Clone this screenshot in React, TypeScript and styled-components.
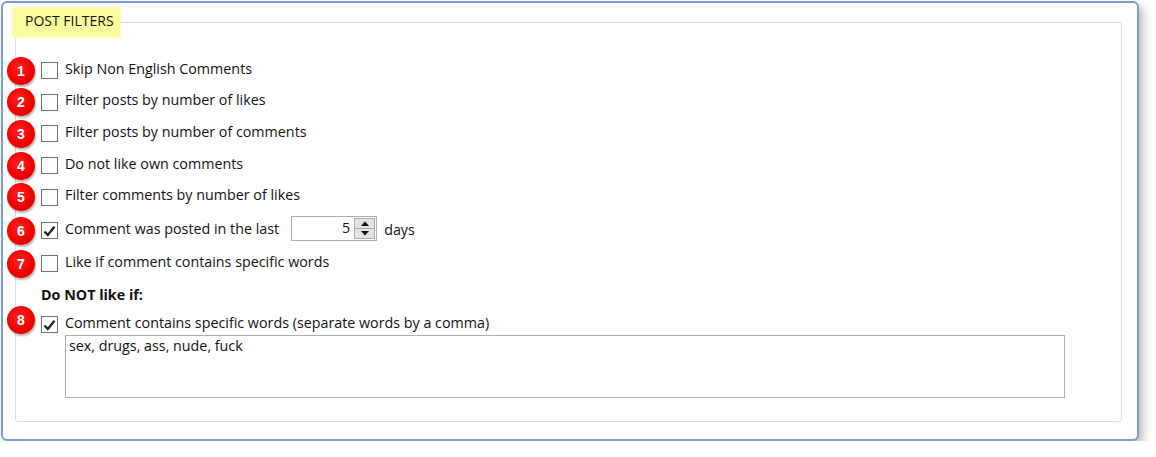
import React from "react";
import styled, { createGlobalStyle } from "styled-components";

const GlobalStyle = createGlobalStyle`
  html, body { margin: 0; padding: 0; background: #fff; }
  body {
    font-family: "Open Sans", "Noto Sans", Arial, sans-serif;
    font-size: 14.3px;
    color: #111;
  }
`;

const Window = styled.div`
  box-sizing: border-box;
  width: 1138px;
  height: 440px;
  margin: 1px 0 0 1px;
  border: 2px solid #7d9cca;
  border-radius: 6px;
  background: #fff;
  box-shadow: 4px 5px 10px rgba(0, 0, 0, 0.28);
  padding: 5px 15px 17px 12px;
`;

const Group = styled.fieldset`
  box-sizing: border-box;
  height: 100%;
  margin: 0;
  padding: 0;
  min-width: 0;
  border: 1px solid #d5dee7;
  border-radius: 3px;
`;

const Legend = styled.legend`
  margin-left: -3px;
  padding: 0 6px 3px 12px;
  line-height: 26px;
  background: #fbfb9d;
  box-shadow: 0 0 2px 1px #fcfcb8;
  color: #111;
  font-size: 14px;
`;

const List = styled.div`
  display: flex;
  flex-direction: column;
  padding: 18px 0 0 25px;
`;

const Row = styled.div<{ $h: number }>`
  position: relative;
  display: flex;
  align-items: center;
  height: ${(p) => p.$h}px;
`;

const Badge = styled.span<{ $dy?: number }>`
  position: absolute;
  left: -34px;
  top: 50%;
  width: 28px;
  height: 28px;
  margin-top: ${(p) => -14 + (p.$dy ?? 0)}px;
  border-radius: 50%;
  background: radial-gradient(circle at 42% 38%, #ff2020 0%, #f20000 55%, #d00000 100%);
  box-shadow: 1px 2px 2px rgba(0, 0, 0, 0.3);
  color: #fff;
  font-family: Arial, "Liberation Sans", sans-serif;
  font-weight: bold;
  font-size: 14px;
  line-height: 28px;
  text-align: center;
`;

const Box = styled.span`
  box-sizing: border-box;
  flex: none;
  width: 17px;
  height: 17px;
  border: 1px solid #707070;
  background: #fff;
  display: flex;
  align-items: center;
  justify-content: center;
`;

const Label = styled.span`
  margin-left: 7px;
  padding-bottom: 5px;
  white-space: nowrap;
`;

const Heading = styled.div`
  display: flex;
  align-items: center;
  height: 35px;
  padding-bottom: 6px;
  box-sizing: border-box;
  font-weight: bold;
`;

const Spinner = styled.div`
  box-sizing: border-box;
  display: flex;
  width: 86px;
  height: 25px;
  margin: 0 0 4px 12px;
  border: 1px solid #abadb3;
  background: #fff;
`;

const SpinValue = styled.div`
  flex: 1;
  text-align: right;
  padding-right: 4px;
  line-height: 22px;
`;

const SpinButtons = styled.div`
  display: flex;
  flex-direction: column;
  width: 21px;
  padding: 1px 1px 1px 0;
`;

const SpinButton = styled.span`
  box-sizing: border-box;
  flex: 1;
  display: flex;
  align-items: center;
  justify-content: center;
  border: 1px solid #acacac;
  background: #e3e3e3;
  & + & {
    border-top: none;
  }
`;

const Unit = styled.span`
  margin-left: 7px;
  padding-bottom: 3px;
`;

const Words = styled.textarea`
  box-sizing: border-box;
  width: 1000px;
  height: 63px;
  margin-left: 24px;
  padding: 0 3px;
  border: 1px solid #abadb3;
  border-radius: 0;
  resize: none;
  font-family: inherit;
  font-size: 14.3px;
  line-height: 19px;
  color: #111;
  outline: none;
`;

function Check({ checked }: { checked?: boolean }) {
  return (
    <Box>
      {checked && (
        <svg width="13" height="12" viewBox="0 0 13 12">
          <path d="M1.5 6.5 L4.8 10 L11.5 1.8" fill="none" stroke="#222" strokeWidth="2.3" />
        </svg>
      )}
    </Box>
  );
}

function Option({
  n,
  text,
  checked,
  h = 31.6,
  dy,
  children,
}: {
  n: number;
  text: string;
  checked?: boolean;
  h?: number;
  dy?: number;
  children?: React.ReactNode;
}) {
  return (
    <Row $h={h}>
      <Badge $dy={dy}>{n}</Badge>
      <Check checked={checked} />
      <Label>{text}</Label>
      {children}
    </Row>
  );
}

export default function App() {
  return (
    <>
      <GlobalStyle />
      <Window>
        <Group>
          <Legend>POST FILTERS</Legend>
          <List>
            <Option n={1} text="Skip Non English Comments" />
            <Option n={2} text="Filter posts by number of likes" />
            <Option n={3} text="Filter posts by number of comments" />
            <Option n={4} text="Do not like own comments" />
            <Option n={5} text="Filter comments by number of likes" />
            <Option n={6} text="Comment was posted in the last" checked h={35.2}>
              <Spinner>
                <SpinValue>5</SpinValue>
                <SpinButtons>
                  <SpinButton>
                    <svg width="8" height="5" viewBox="0 0 8 5">
                      <path d="M0 5 L4 0.5 L8 5 Z" fill="#111" />
                    </svg>
                  </SpinButton>
                  <SpinButton>
                    <svg width="8" height="5" viewBox="0 0 8 5">
                      <path d="M0 0 L8 0 L4 4.5 Z" fill="#111" />
                    </svg>
                  </SpinButton>
                </SpinButtons>
              </Spinner>
              <Unit>days</Unit>
            </Option>
            <Option n={7} text="Like if comment contains specific words" />
            <Heading>Do NOT like if:</Heading>
            <Option
              n={8}
              text="Comment contains specific words (separate words by a comma)"
              checked
              h={20}
              dy={-5}
            />
            <Words defaultValue="sex, drugs, ass, nude, fuck" />
          </List>
        </Group>
      </Window>
    </>
  );
}
